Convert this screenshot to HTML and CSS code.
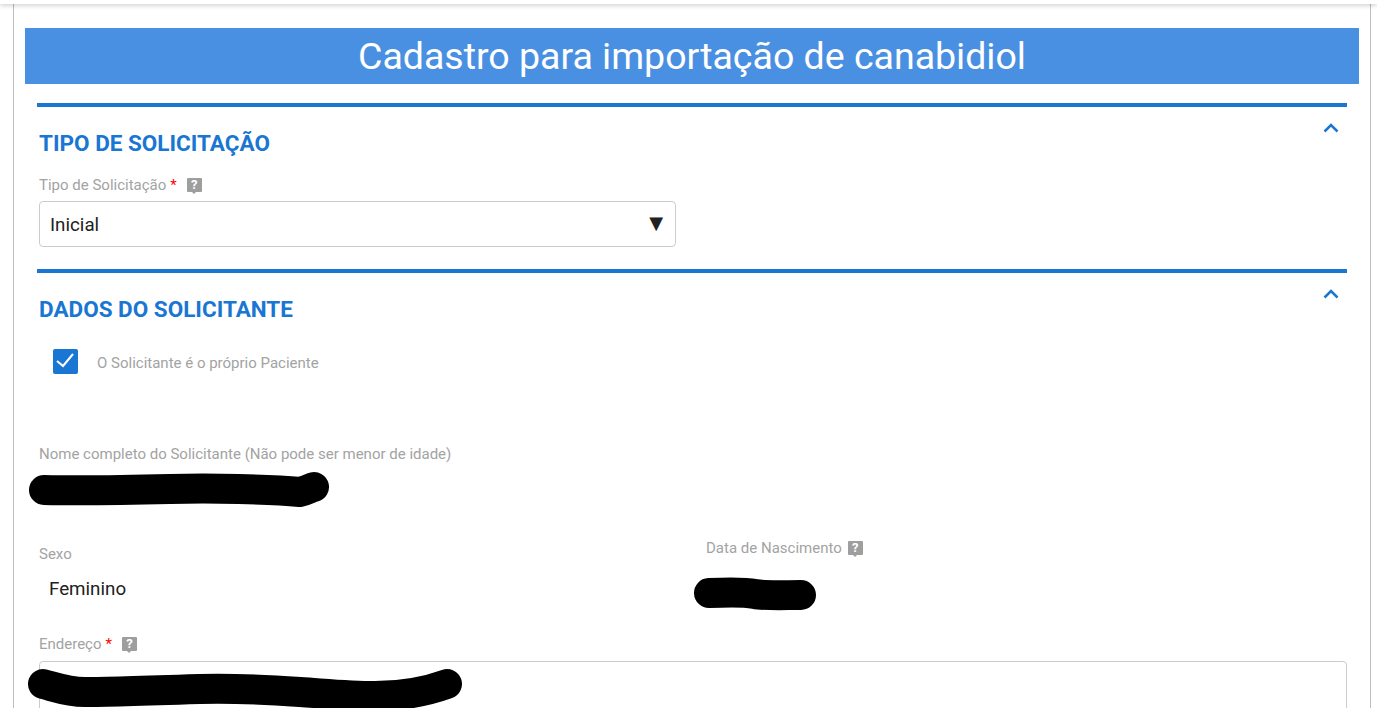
FILE: index.html
```html
<!DOCTYPE html>
<html lang="en">
<head>
    <meta charset="UTF-8">
    <meta name="viewport" content="width=device-width, initial-scale=1.0">
    <title>Cadastro para importação de canabidiol</title>
    <link rel="stylesheet" href="styles.css">
</head>
<body>
    <div class="top-bar"></div>
    <div class="page">
        <h1 class="banner">Cadastro para importação de canabidiol</h1>

        <section class="panel">
            <div class="panel-head">
                <h2>TIPO DE SOLICITAÇÃO</h2>
                <svg class="chevron" viewBox="0 0 16 10"><path d="M1.500 8.500 8 2l6.500 6.500"/></svg>
            </div>
            <div class="field-label">Tipo de Solicitação <span class="req">*</span> <span class="help">?</span></div>
            <div class="select-box">
                <span class="select-text">Inicial</span>
                <span class="arrow">▼</span>
            </div>
        </section>

        <section class="panel panel-second">
            <div class="panel-head">
                <h2>DADOS DO SOLICITANTE</h2>
                <svg class="chevron" viewBox="0 0 16 10"><path d="M1.500 8.500 8 2l6.500 6.500"/></svg>
            </div>
            <div class="check-row">
                <span class="check-box">
                    <svg viewBox="0 0 25 25"><path d="M4 12l6 5 10-12"/></svg>
                </span>
                <span class="check-label">O Solicitante é o próprio Paciente</span>
            </div>

            <div class="field-label name-label">Nome completo do Solicitante (Não pode ser menor de idade)</div>
            <div class="plain-value"></div>

            <div class="two-cols">
                <div class="col-sexo">
                    <div class="field-label">Sexo</div>
                    <div class="plain-value sexo-value">Feminino</div>
                </div>
                <div class="col-data">
                    <div class="field-label data-label">Data de Nascimento <span class="help">?</span></div>
                </div>
            </div>

            <div class="field-label end-label">Endereço <span class="req">*</span> <span class="help">?</span></div>
            <div class="text-box"></div>
        </section>

        <!-- tarjas pretas por cima dos dados -->
        <svg class="scribble" viewBox="0 0 1377 708">
            <path class="s30" d="M44 490C90 491 130 490 170 489S270 489 300 492C306 491 310 488 314 487"/>
            <path class="s30" d="M709 593C730 592 745 592 755 594S785 595 801 595"/>
            <path class="s30" d="M43 684C55 687 68 692 85 692S170 690 200 689 270 690 300 692 350 696 375 696 425 692 447 684"/>
        </svg>
    </div>
</body>
</html>
```

FILE: styles.css
```css
* {
    margin: 0;
    padding: 0;
    box-sizing: border-box;
    font-family: 'Roboto', sans-serif;
}

body {
    background-color: #fff;
    height: 712px;
    overflow: hidden;
}

.top-bar {
    height: 4px;
    background-color: #fff;
    box-shadow: 0 1px 5px rgba(0, 0, 0, 0.25);
    position: relative;
    z-index: 1;
}

.page {
    position: relative;
    height: 704px;
    margin: 0 6px 0 13px;
    padding: 24px 11px 0 11px;
    border-left: 1px solid #bdbdbd;
    border-right: 1px solid #bdbdbd;
    overflow: hidden;
}

.banner {
    height: 56px;
    line-height: 57px;
    background-color: #4a90e2;
    color: #fff;
    font-size: 37.5px;
    font-weight: 400;
    text-align: center;
}

.panel {
    margin: 19px 12px 0 12px;
    border-top: 4px solid #1976d2;
}

.panel-second {
    margin-top: 22px;
}

.panel-head {
    display: flex;
    justify-content: space-between;
    padding: 23px 8px 0 2px;
    height: 70px;
}

h2 {
    font-size: 22.5px;
    line-height: 26px;
    font-weight: 700;
    color: #1976d2;
}

.chevron {
    width: 16px;
    height: 10px;
    margin-top: -7px;
    fill: none;
    stroke: #1976d2;
    stroke-width: 2.500;
}

.field-label {
    display: flex;
    align-items: center;
    gap: 4px;
    height: 16px;
    margin-left: 2px;
    font-size: 15px;
    color: #a3a3a3;
}

.req {
    color: #f00;
}

.help {
    position: relative;
    width: 15px;
    height: 14px;
    margin-left: 6px;
    background-color: #9e9e9e;
    border-radius: 1px;
    color: #fff;
    font-size: 13px;
    font-weight: 700;
    line-height: 14px;
    text-align: center;
}

.help::after {
    content: "";
    position: absolute;
    left: 5px;
    top: 14px;
    border: 2px solid transparent;
    border-top-color: #9e9e9e;
    border-bottom: 0;
}

.select-box {
    display: flex;
    justify-content: space-between;
    align-items: center;
    width: 637px;
    height: 46px;
    margin: 8px 0 0 2px;
    padding: 0 12px 0 10px;
    border: 1px solid #ccc;
    border-radius: 4px;
    font-size: 18.750px;
    color: #212121;
}

.select-text {
    padding-top: 2px;
}

.arrow {
    padding-bottom: 4px;
    font-family: 'DejaVu Sans', sans-serif;
    font-size: 18px;
}

.check-row {
    display: flex;
    align-items: center;
    margin: 6px 0 0 16px;
}

.check-box {
    width: 25px;
    height: 25px;
    background-color: #1976d2;
    border-radius: 2px;
}

.check-box svg {
    display: block;
    fill: none;
    stroke: #fff;
    stroke-width: 2;
}

.check-label {
    margin-left: 19px;
    padding-top: 2px;
    font-size: 15px;
    color: #a3a3a3;
}

.name-label {
    margin-top: 72px;
}

.plain-value {
    height: 46px;
    font-size: 18.750px;
}

.two-cols {
    display: grid;
    grid-template-columns: 667px 1fr;
    margin-top: 38px;
}

.sexo-value {
    padding: 16px 0 0 12px;
    color: #212121;
}

.data-label {
    margin-top: -6px;
}

.data-label .help {
    margin-left: 2px;
}

.end-label {
    margin-top: 28px;
}

.text-box {
    height: 80px;
    margin: 9px 0 0 2px;
    border: 1px solid #ccc;
    border-radius: 4px;
}

.scribble {
    position: absolute;
    left: -14px;
    top: -4px;
    width: 1377px;
    height: 708px;
    pointer-events: none;
}

.s30 {
    fill: none;
    stroke: #000;
    stroke-width: 30;
    stroke-linecap: round;
    stroke-linejoin: round;
}
```
